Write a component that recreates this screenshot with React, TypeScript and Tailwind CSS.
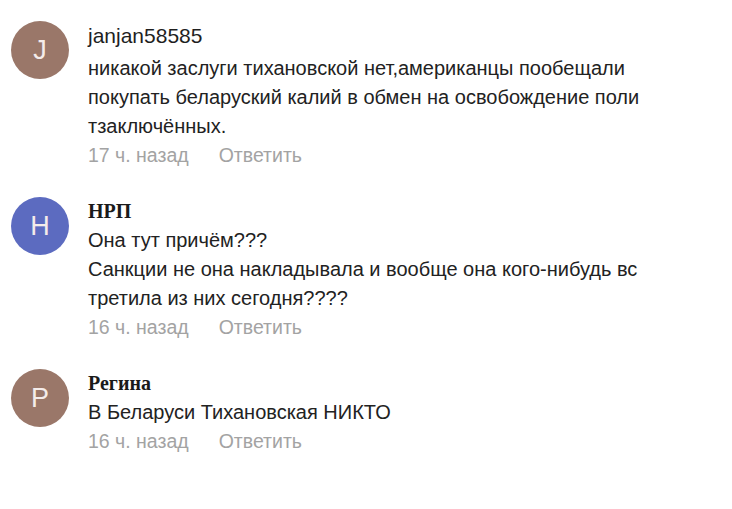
import React from 'react'

type Comment = {
  initial: string
  avatar: string
  name: string
  serifName?: boolean
  lines: string[]
  time: string
}

const comments: Comment[] = [
  {
    initial: 'J',
    avatar: 'bg-[#9a7769]',
    name: 'janjan58585',
    lines: [
      'никакой заслуги тихановской нет,американцы пообещали',
      'покупать беларуский калий в обмен на освобождение поли',
      'тзаключённых.',
    ],
    time: '17 ч. назад',
  },
  {
    initial: 'H',
    avatar: 'bg-[#5c6bc0]',
    name: 'НРП',
    serifName: true,
    lines: [
      'Она тут причём???',
      'Санкции не она накладывала и вообще она кого-нибудь вс',
      'третила из них сегодня????',
    ],
    time: '16 ч. назад',
  },
  {
    initial: 'P',
    avatar: 'bg-[#9a7769]',
    name: 'Регина',
    serifName: true,
    lines: ['В Беларуси Тихановская НИКТО'],
    time: '16 ч. назад',
  },
]

function CommentItem({ c }: { c: Comment }) {
  return (
    <div className="flex gap-[19px] mb-[27px]">
      <div
        className={`${c.avatar} w-[58px] h-[58px] rounded-full flex items-center justify-center shrink-0 text-[27px] text-[#f4ecea]`}
      >
        {c.initial}
      </div>
      <div className="flex flex-col">
        {c.serifName ? (
          <div className="text-[20px] leading-[29px] font-bold text-[#1a1a1a] font-['Liberation_Serif',serif]">
            {c.name}
          </div>
        ) : (
          <div className="text-[21px] leading-[29px] text-[#1f1f1f] mb-[4px]">{c.name}</div>
        )}
        {c.lines.map((l, i) => (
          <div key={i} className="text-[20px] leading-[29px] text-[#222] whitespace-nowrap">
            {l}
          </div>
        ))}
        <div className="flex text-[19.5px] leading-[29px] text-[#a3a3a3]">
          <span>{c.time}</span>
          <span className="ml-[30px]">Ответить</span>
        </div>
      </div>
    </div>
  )
}

export default function App() {
  return (
    <div className="w-[732px] h-[509px] bg-white pt-[21px] pl-[11px] overflow-hidden font-['Liberation_Sans',Arial,sans-serif]">
      {comments.map((c, i) => (
        <CommentItem key={i} c={c} />
      ))}
    </div>
  )
}
